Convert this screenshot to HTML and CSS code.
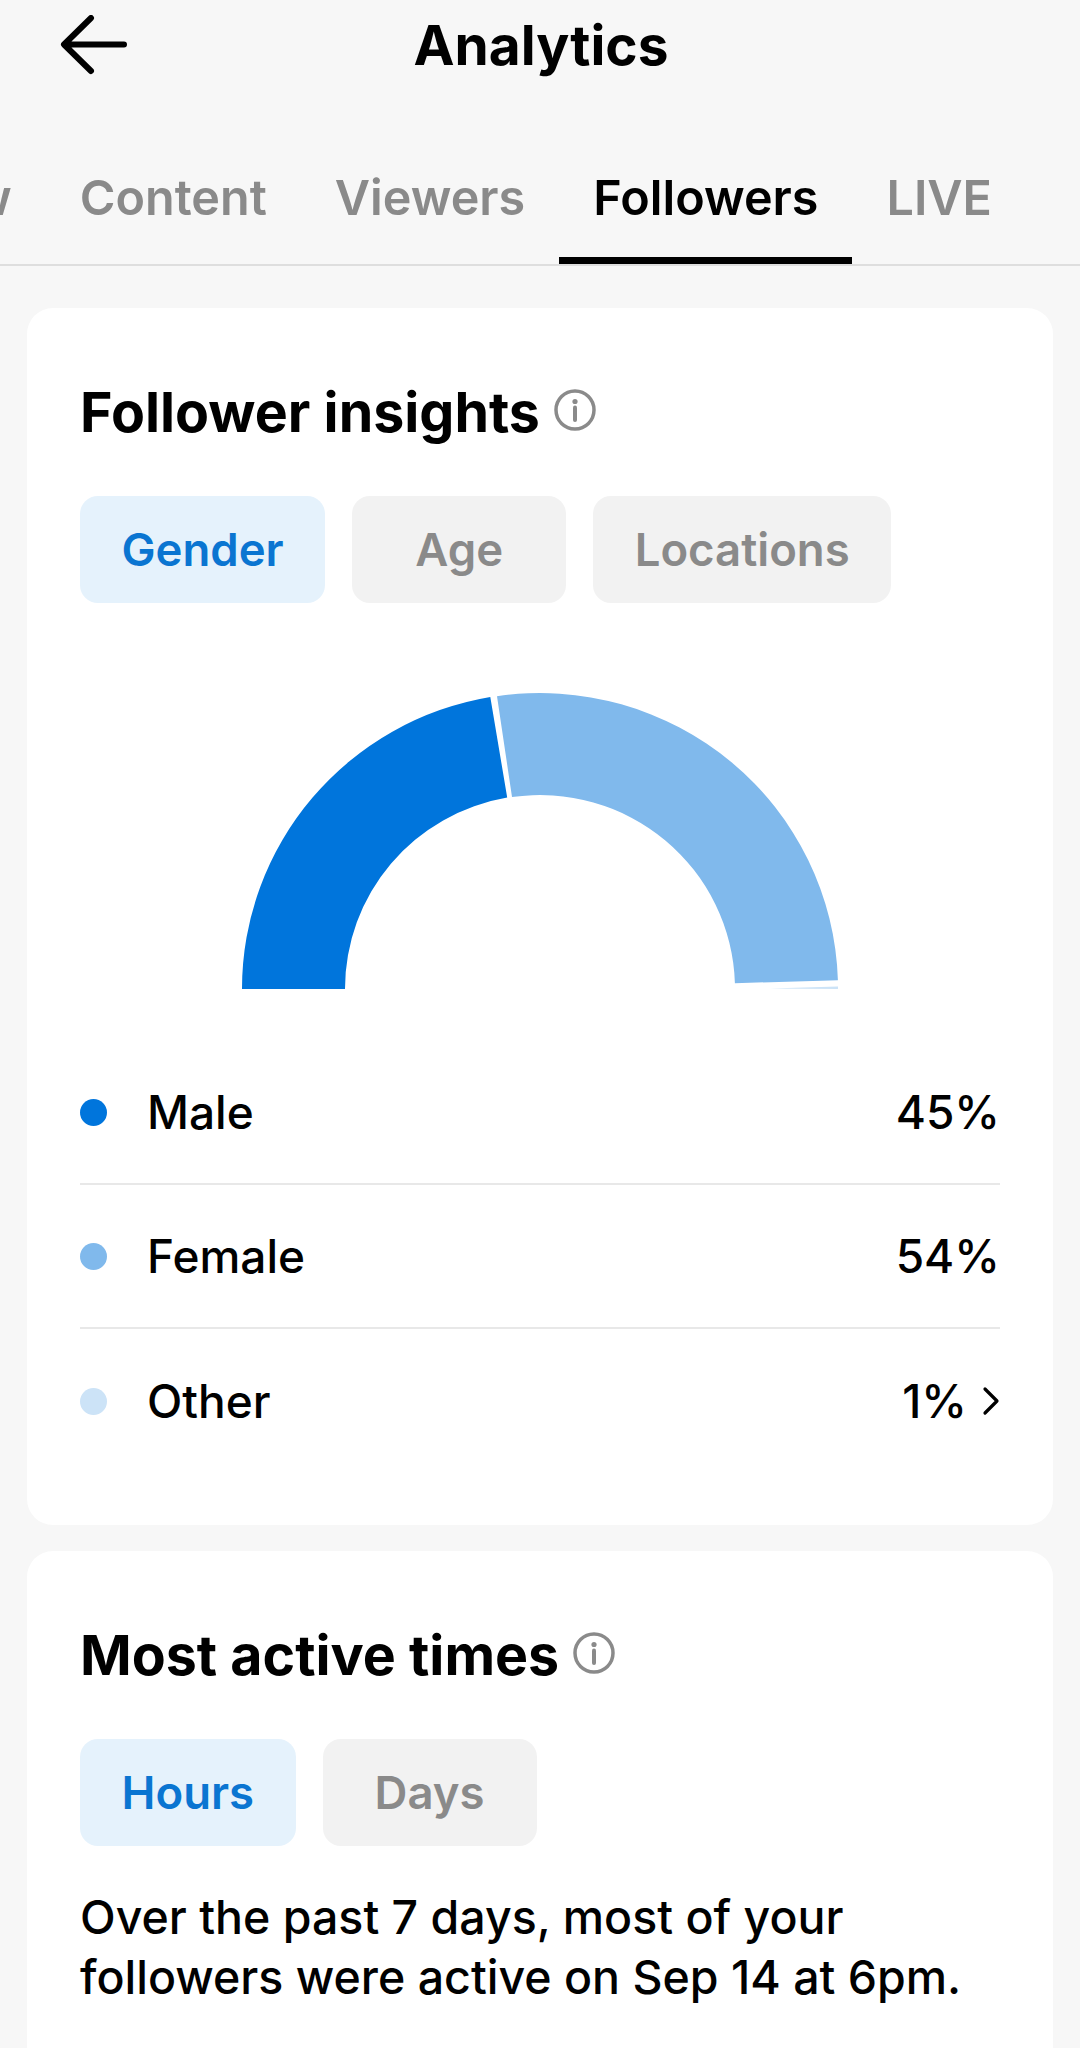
FILE: index.html
```html
<!DOCTYPE html>
<html lang="en">
<head>
    <meta charset="UTF-8">
    <meta name="viewport" content="width=device-width, initial-scale=1.0">
    <title>Analytics</title>
    <link rel="stylesheet" href="styles.css">
</head>
<body>
    <header class="top-bar">
        <a class="back-btn" href="#" aria-label="Back">
            <svg width="70" height="60" viewBox="0 0 70 60">
                <path d="M66 29.500H7M33 3 6 29.500 33 56" fill="none" stroke="#000" stroke-width="6" stroke-linecap="round" stroke-linejoin="round"/>
            </svg>
        </a>
        <h1>Analytics</h1>
    </header>

    <nav class="tabs">
        <a class="tab" href="#">Overview</a>
        <a class="tab" href="#">Content</a>
        <a class="tab" href="#">Viewers</a>
        <a class="tab active" href="#">Followers</a>
        <a class="tab" href="#">LIVE</a>
    </nav>

    <main class="content">
        <!-- Follower insights -->
        <section class="card">
            <h2 class="card-title">Follower insights
                <svg class="info-icon" width="42" height="42" viewBox="0 0 42 42">
                    <circle cx="21" cy="21" r="19" fill="none" stroke="#8a8a8a" stroke-width="3.500"/>
                    <circle cx="21" cy="12.500" r="2.600" fill="#8a8a8a"/>
                    <path d="M21 18.500v12.500" stroke="#8a8a8a" stroke-width="4" stroke-linecap="round"/>
                </svg>
            </h2>
            <div class="chips">
                <button class="chip active">Gender</button>
                <button class="chip">Age</button>
                <button class="chip">Locations</button>
            </div>

            <svg class="gauge" width="600" height="300" viewBox="0 0 600 300">
                <path d="M2 299A298 296 0 0 1 250.300 7L267.200 107.600A195 194 0 0 0 105 299Z" fill="#0075dc"/>
                <path d="M257 6.200A298 296 0 0 1 597.900 290.200L494.900 293.200A195 194 0 0 0 272 107.100Z" fill="#80b9ec"/>
                <path d="M598 296.500 530 298.500 598 299Z" fill="#cce3f7"/>
            </svg>

            <ul class="legend">
                <li class="legend-row">
                    <span class="dot dot-male"></span>
                    <span class="legend-label">Male</span>
                    <span class="legend-value">45%</span>
                </li>
                <li class="legend-row">
                    <span class="dot dot-female"></span>
                    <span class="legend-label">Female</span>
                    <span class="legend-value">54%</span>
                </li>
                <li class="legend-row">
                    <span class="dot dot-other"></span>
                    <span class="legend-label">Other</span>
                    <span class="legend-value">1%</span>
                    <svg class="chevron" width="18" height="30" viewBox="0 0 18 30">
                        <path d="M3 3 15 15 3 27" fill="none" stroke="#000" stroke-width="3.200" stroke-linecap="round" stroke-linejoin="round"/>
                    </svg>
                </li>
            </ul>
        </section>

        <!-- Most active times -->
        <section class="card card-last">
            <h2 class="card-title">Most active times
                <svg class="info-icon" width="42" height="42" viewBox="0 0 42 42">
                    <circle cx="21" cy="21" r="19" fill="none" stroke="#8a8a8a" stroke-width="3.500"/>
                    <circle cx="21" cy="12.500" r="2.600" fill="#8a8a8a"/>
                    <path d="M21 18.500v12.500" stroke="#8a8a8a" stroke-width="4" stroke-linecap="round"/>
                </svg>
            </h2>
            <div class="chips">
                <button class="chip active">Hours</button>
                <button class="chip">Days</button>
            </div>
            <p class="summary">Over the past 7 days, most of your followers were active on Sep 14 at 6pm.</p>
        </section>
    </main>
</body>
</html>
```

FILE: styles.css
```css
* {
    box-sizing: border-box;
}
html, body {
    margin: 0;
    height: 2048px;
    overflow: hidden;
}
body {
    background-color: #f7f7f7;
    font-family: Inter, "Liberation Sans", sans-serif;
    color: #000;
}
a {
    color: inherit;
    text-decoration: none;
}

.top-bar {
    display: grid;
    grid-template-columns: 1fr auto 1fr;
    align-items: center;
    height: 90px;
    padding-left: 58px;
}
.back-btn {
    display: flex;
}
.top-bar h1 {
    margin: 0 56px 0 0;
    font-size: 55px;
    font-weight: 700;
    line-height: 90px;
}

.tabs {
    display: flex;
    justify-content: flex-end;
    height: 176px;
    padding: 76px 54px 0 0;
    border-bottom: 2px solid #dedede;
}
.tab {
    flex-shrink: 0;
    height: 98px;
    padding: 0 34px;
    color: #8a8a8a;
    font-size: 48.500px;
    font-weight: 600;
    line-height: 64px;
}
.tab.active {
    color: #000;
    border-bottom: 7px solid #000;
}

.content {
    padding: 42px 27px 0;
}
.card {
    background: #fff;
    border-radius: 26px;
    padding: 72px 53px 52px;
    margin-bottom: 26px;
}
.card-last {
    padding-bottom: 300px;
}
.card-title {
    display: flex;
    align-items: center;
    gap: 14px;
    margin: 0 0 52px;
    font-size: 55.500px;
    font-weight: 700;
    line-height: 64px;
}
.info-icon {
    flex-shrink: 0;
    margin-top: -4px;
}

.chips {
    display: flex;
    gap: 27px;
}
.chip {
    min-width: 214px;
    height: 107px;
    padding: 0 41.500px;
    border: none;
    border-radius: 18px;
    background: #f2f2f2;
    color: #8a8a8a;
    font-family: inherit;
    font-size: 45.500px;
    font-weight: 600;
}
.chip.active {
    background: #e5f2fc;
    color: #0a75d1;
}

.gauge {
    display: block;
    margin: 87px auto 0;
}

.legend {
    list-style: none;
    margin: 51px 0 0;
    padding: 0;
}
.legend-row {
    display: flex;
    align-items: center;
    height: 144px;
    border-bottom: 2px solid #e8e8e8;
    font-size: 46px;
    font-weight: 500;
}
.legend-row:last-child {
    border-bottom: none;
}
.dot {
    width: 27px;
    height: 27px;
    margin-right: 40px;
    border-radius: 50%;
}
.dot-male {
    background: #0075dc;
}
.dot-female {
    background: #80b9ec;
}
.dot-other {
    background: #cce3f7;
}
.legend-label {
    flex: 1;
}
.chevron {
    margin-left: 15px;
}

.summary {
    margin: 41px 0 0;
    font-size: 46.500px;
    font-weight: 500;
    line-height: 60px;
}
```
